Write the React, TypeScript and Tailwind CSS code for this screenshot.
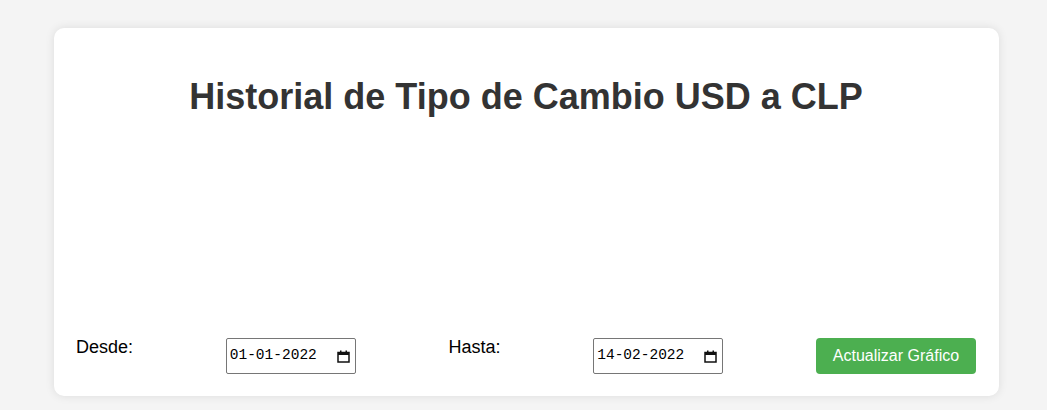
import React from "react";

function CalIcon() {
  return (
    <svg width="13" height="13" viewBox="0 0 13 13" className="block">
      <rect x="1" y="2.5" width="11" height="9.5" fill="none" stroke="#111" strokeWidth="1.5" />
      <rect x="1" y="2.5" width="11" height="2.5" fill="#111" />
      <rect x="3" y="0.5" width="1.5" height="2.5" fill="#111" />
      <rect x="8.5" y="0.5" width="1.5" height="2.5" fill="#111" />
    </svg>
  );
}

function DateBox({ value }: { value: string }) {
  return (
    <div className="w-[130px] h-[36px] border border-[#767676] rounded-[2px] bg-white flex items-center pl-[3px] pr-[5px] justify-between">
      <span className="text-[14.5px] text-black font-['Liberation_Mono',monospace]">{value}</span>
      <CalIcon />
    </div>
  );
}

export default function App() {
  return (
    <div className="min-h-[410px] w-full bg-[#f4f4f4] pt-[28px] font-['Liberation_Sans',Arial,sans-serif]">
      <div className="ml-[54px] w-[945px] bg-white rounded-[10px] shadow-[0_0_10px_rgba(0,0,0,0.1)] pl-[22px] pr-[23px] pt-[48px] pb-[22px]">
        <h1 className="text-[36px] font-bold text-[#333] text-center leading-[41px]">
          Historial de Tipo de Cambio USD a CLP
        </h1>
        <div className="h-[221px]" />
        <div className="flex justify-between items-start">
          <label className="text-[18px] text-black leading-[20px] mt-[-1px]">Desde:</label>
          <DateBox value="01-01-2022" />
          <label className="text-[18px] text-black leading-[20px] mt-[-1px]">Hasta:</label>
          <DateBox value="14-02-2022" />
          <button className="w-[160px] h-[36px] bg-[#4caf50] text-white text-[16px] rounded-[4px]">
            Actualizar Gráfico
          </button>
        </div>
      </div>
    </div>
  );
}
